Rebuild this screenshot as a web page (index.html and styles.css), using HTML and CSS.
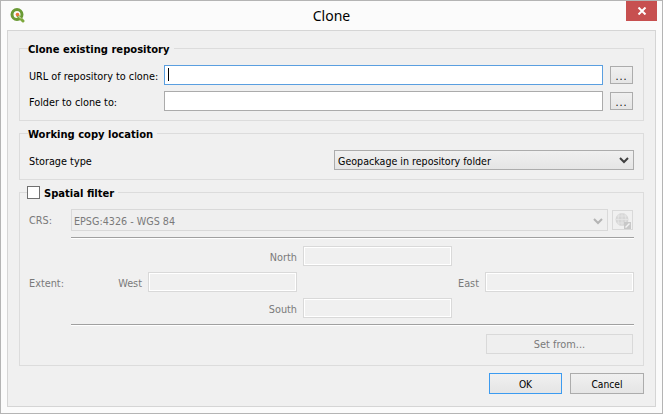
FILE: index.html
```html
<!DOCTYPE html>
<html lang="en">
<head>
    <meta charset="UTF-8">
    <title>Clone</title>
    <link rel="stylesheet" href="styles.css">
</head>
<body>
    <div class="window">
        <div class="titlebar">
            <svg class="logo" width="18" height="16" viewBox="0 0 18 16">
                <circle cx="8" cy="7.5" r="5" fill="none" stroke="#6a9a35" stroke-width="3"/>
                <path d="M9 9l5 5" stroke="#7da83c" stroke-width="3" stroke-linecap="round"/>
                <path d="M9 8.500l3 3" stroke="#e6efd8" stroke-width="1"/>
                <circle cx="8.500" cy="7.500" r="1.800" fill="#e8753a"/>
            </svg>
            <span class="title">Clone</span>
            <div class="close">
                <svg width="10" height="8" viewBox="0 0 10 8"><path d="M1.5 0.5l7 7M8.5 0.5l-7 7" stroke="#fff" stroke-width="2"/></svg>
            </div>
        </div>
        <div class="panel">
            <fieldset class="group">
                <legend>Clone existing repository</legend>
                <div class="repo-grid">
                    <label>URL of repository to clone:</label>
                    <div class="input focused"><span class="caret"></span></div>
                    <button class="btn dots">...</button>
                    <label>Folder to clone to:</label>
                    <div class="input"></div>
                    <button class="btn dots">...</button>
                </div>
            </fieldset>
            <fieldset class="group">
                <legend>Working copy location</legend>
                <div class="storage-row">
                    <label>Storage type</label>
                    <div class="combo storage">
                        <span>Geopackage in repository folder</span>
                        <svg width="10" height="7" viewBox="0 0 10 7"><path d="M1 1l4 4 4-4" fill="none" stroke="#404040" stroke-width="2"/></svg>
                    </div>
                </div>
            </fieldset>
            <fieldset class="group filter">
                <legend class="check-legend"><span class="checkbox"></span>Spatial filter</legend>
                <div class="crs-row">
                    <label class="muted crs-label">CRS:</label>
                    <div class="combo disabled">
                        <span>EPSG:4326 - WGS 84</span>
                        <svg width="10" height="7" viewBox="0 0 10 7"><path d="M1 1l4 4 4-4" fill="none" stroke="#b4b4b4" stroke-width="2"/></svg>
                    </div>
                    <div class="globe-btn">
                        <svg width="17" height="17" viewBox="0 0 17 17">
                            <circle cx="8" cy="7.5" r="6.5" fill="#d6d6d6"/>
                            <path d="M1.5 7.5h13M3 4h10M3 11h10M8 1v13M5 2q-2 5.500 0 11M11 2q2 5.500 0 11" fill="none" stroke="#e6e6e6" stroke-width="0.8"/>
                            <rect x="10" y="10" width="7" height="7" fill="#c8c8c8"/>
                            <path d="M11.500 15.500l4-4" stroke="#f2f2f2" stroke-width="1.500"/>
                        </svg>
                    </div>
                </div>
                <div class="rule rule-top"></div>
                <div class="extent-grid">
                    <label class="muted north-label">North</label>
                    <div class="input off north"></div>
                    <label class="muted extent-label">Extent:</label>
                    <label class="muted west-label">West</label>
                    <div class="input off west"></div>
                    <label class="muted east-label">East</label>
                    <div class="input off east"></div>
                    <label class="muted south-label">South</label>
                    <div class="input off south"></div>
                </div>
                <div class="rule rule-bottom"></div>
                <div class="set-row">
                    <button class="btn off-btn">Set from...</button>
                </div>
            </fieldset>
            <div class="footer">
                <button class="btn action default">OK</button>
                <button class="btn action cancel">Cancel</button>
            </div>
        </div>
    </div>
</body>
</html>
```

FILE: styles.css
```css
* {
    box-sizing: border-box;
}
body {
    margin: 0;
    font-family: "DejaVu Sans Condensed", "DejaVu Sans", sans-serif;
    font-stretch: condensed;
    font-size: 10.6px;
    color: #000;
    background: #fbfbfb;
}
.window {
    width: 663px;
    height: 414px;
    border: 1px solid #b4b4b4;
    background: #fbfbfb;
    display: flex;
    flex-direction: column;
}
.titlebar {
    height: 29px;
    display: flex;
    align-items: flex-start;
    position: relative;
}
.logo {
    margin: 6px 0 0 8px;
}
.title {
    position: absolute;
    left: 0;
    right: 0;
    top: 5px;
    text-align: center;
    font-family: "Noto Sans", sans-serif;
    font-stretch: normal;
    font-size: 14px;
    line-height: 20px;
}
.close {
    position: absolute;
    top: 0;
    right: 5px;
    width: 31px;
    height: 20px;
    background: #c75050;
    display: flex;
    align-items: center;
    justify-content: center;
}
.panel {
    flex: 1;
    margin: 0 6px 6px;
    padding: 10px 11px 0;
    background: #f0f0f0;
    border: 1px solid #d5d5d5;
    display: flex;
    flex-direction: column;
    gap: 5px;
}
.group {
    margin: 0;
    padding: 10px 9px 9px;
    border: 1px solid #dcdcdc;
    min-width: 0;
}
legend {
    margin-left: -1px;
    padding: 0 4px 0 0;
    font-size: 11.1px;
    font-weight: bold;
    line-height: 18px;
    height: 14px;
}
.check-legend {
    margin-left: -2px;
    display: flex;
    align-items: flex-start;
}
.checkbox {
    width: 13px;
    height: 13px;
    margin: 1px 4px 0 0;
    background: #fff;
    border: 1px solid #707070;
}
label {
    padding-top: 2px;
    font-size: 10.8px;
    line-height: 20px;
    white-space: nowrap;
}
.repo-grid {
    display: grid;
    grid-template-columns: 129px 1fr 25px;
    grid-auto-rows: 20px;
    gap: 6px;
}
.input {
    height: 20px;
    background: #fff;
    border: 1px solid #ababab;
    padding: 2px;
}
.focused {
    border-color: #5a9fe0;
}
.caret {
    display: block;
    width: 1px;
    height: 13px;
    margin-left: 1px;
    background: #000;
}
.btn {
    font: inherit;
    color: #000;
    padding: 0;
    background: linear-gradient(#f0f0f0, #e5e5e5);
    border: 1px solid #acacac;
}
.dots {
    margin: 1px;
    height: 18px;
    padding-top: 2px;
    line-height: 12px;
    letter-spacing: 1px;
}
.storage-row {
    height: 20px;
    display: flex;
    justify-content: space-between;
}
.combo {
    height: 20px;
    padding: 1px 4px 0 3px;
    display: flex;
    align-items: center;
    justify-content: space-between;
    background: linear-gradient(#f0f0f0, #e5e5e5);
    border: 1px solid #acacac;
}
.storage {
    width: 300px;
}
.filter {
    padding-bottom: 11px;
}
.muted {
    color: #7a7a7a;
}
.crs-row {
    display: flex;
    align-items: flex-start;
}
.crs-label {
    width: 42px;
}
.disabled {
    flex: 1;
    height: 22px;
    padding: 2px 4px 0 2px;
    font-size: 10.7px;
    background: #efefef;
    border-color: #d9d9d9;
    color: #7a7a7a;
}
.globe-btn {
    width: 21px;
    height: 20px;
    margin: 1px 1px 0 4px;
    border: 1px solid #d9d9d9;
    display: flex;
    align-items: center;
    justify-content: center;
}
.rule {
    margin-left: 42px;
    height: 2px;
    border-top: 1px solid #a0a0a0;
    border-bottom: 1px solid #fff;
}
.rule-top {
    margin-top: 6px;
}
.rule-bottom {
    margin-top: 6px;
}
.extent-grid {
    margin-top: 7px;
    display: grid;
    grid-template-columns: 113px 149px 149px 1fr 149px;
    grid-template-rows: 20px 20px 20px;
    gap: 6px;
}
.off {
    background: #f0f0f0;
    border-color: #d9d9d9;
    box-shadow: inset 0 0 0 1px #fff;
}
.north-label { grid-area: 1 / 2; justify-self: end; }
.north { grid-area: 1 / 3; }
.extent-label { grid-area: 2 / 1; justify-self: start; }
.west-label { grid-area: 2 / 1; justify-self: end; }
.west { grid-area: 2 / 2; }
.east-label { grid-area: 2 / 4; justify-self: end; }
.east { grid-area: 2 / 5; }
.south-label { grid-area: 3 / 2; justify-self: end; }
.south { grid-area: 3 / 3; }
.set-row {
    margin-top: 8px;
    padding-right: 1px;
    display: flex;
    justify-content: flex-end;
}
.off-btn {
    width: 147px;
    height: 20px;
    padding-top: 1px;
    font-size: 10.9px;
    background: #efefef;
    border-color: #d9d9d9;
    color: #7a7a7a;
}
.footer {
    margin-top: 2px;
    display: flex;
    justify-content: flex-end;
    gap: 8px;
}
.action {
    height: 21px;
    padding-top: 1px;
    font-size: 10.2px;
}
.default {
    width: 73px;
    border-color: #3c9bf0;
}
.cancel {
    width: 74px;
}
```
